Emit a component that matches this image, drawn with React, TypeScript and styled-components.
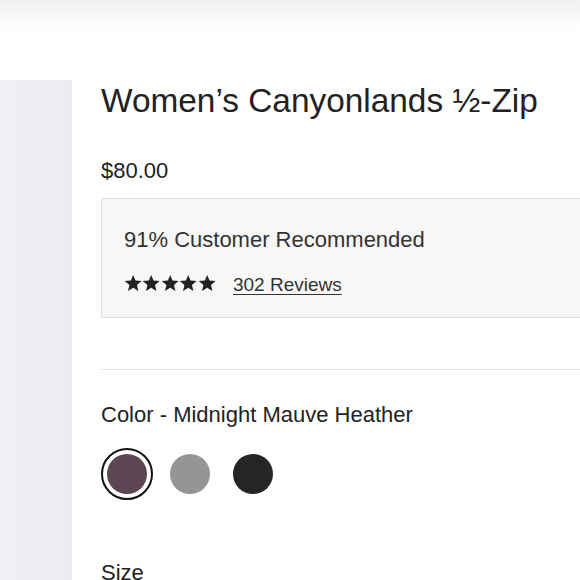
import React from "react";
import styled, { createGlobalStyle } from "styled-components";

const GlobalStyle = createGlobalStyle`
  html, body {
    margin: 0;
    padding: 0;
    background: #ffffff;
    font-family: "Liberation Sans", Arial, Helvetica, sans-serif;
    color: #222222;
  }
`;

const Page = styled.div`
  width: 580px;
  height: 580px;
  overflow: hidden;
  display: flex;
  flex-direction: column;
`;

const HeaderShade = styled.div`
  height: 30px;
  flex-shrink: 0;
  background: linear-gradient(to bottom, #f1f1f1 0%, #ffffff 100%);
`;

const Body = styled.div`
  display: flex;
  flex-direction: row;
  gap: 29px;
  flex: 1;
`;

const Gallery = styled.div`
  width: 72px;
  flex-shrink: 0;
  margin-top: 50px;
  background: linear-gradient(to right, #eef0f3 0%, #eaecef 100%);
`;

const Details = styled.div`
  flex: 1;
  min-width: 0;
  padding-top: 50px;
`;

const Title = styled.h1`
  margin: 0;
  font-size: 33.4px;
  font-weight: 400;
  line-height: 42px;
  color: #222222;
  white-space: nowrap;
`;

const Price = styled.div`
  margin-top: 36px;
  font-size: 22px;
  line-height: 26px;
`;

const ReviewBox = styled.div`
  margin-top: 14px;
  margin-right: -20px;
  height: 120px;
  box-sizing: border-box;
  background: #f7f7f7;
  border: 1px solid #dcdcdc;
  border-radius: 2px;
  padding: 28px 22px 0;
`;

const Recommended = styled.div`
  font-size: 22px;
  line-height: 26px;
  color: #333333;
`;

const RatingRow = styled.div`
  display: flex;
  align-items: flex-start;
  gap: 17px;
  margin-top: 20px;
`;

const Stars = styled.div`
  display: flex;
  margin-top: 1px;
  color: #222222;
`;

const ReviewLink = styled.a`
  font-size: 19px;
  line-height: 24px;
  color: #333333;
  text-decoration: underline;
  text-underline-offset: 3px;
  text-decoration-thickness: 1px;
`;

const Divider = styled.hr`
  margin: 51px -20px 0 0;
  border: 0;
  border-top: 1px solid #e2e2e2;
`;

const SectionLabel = styled.div`
  margin-top: 32px;
  font-size: 22px;
  line-height: 26px;
  color: #222222;
`;

const Swatches = styled.div`
  display: flex;
  align-items: center;
  gap: 11px;
  margin-top: 20px;
`;

const Swatch = styled.button<{ $color: string; $selected?: boolean }>`
  width: 52px;
  height: 52px;
  padding: 0;
  border-radius: 50%;
  border: 2px solid ${(p) => (p.$selected ? "#111111" : "transparent")};
  background: #ffffff;
  display: flex;
  align-items: center;
  justify-content: center;
  cursor: pointer;

  &::after {
    content: "";
    display: block;
    width: 40px;
    height: 40px;
    border-radius: 50%;
    background: ${(p) => p.$color};
  }
`;

const SizeLabel = styled(SectionLabel)`
  margin-top: 60px;
`;

const colors = [
  { name: "Midnight Mauve Heather", hex: "#5b4651" },
  { name: "Grey", hex: "#959595" },
  { name: "Black", hex: "#252527" },
];

const Star = () => (
  <svg width="18.4" height="18" viewBox="0 0 24 24" aria-hidden="true">
    <path
      fill="currentColor"
      d="M12 1.2l3.1 7.6 8.2.6-6.3 5.3 2 8L12 18.3l-7 4.4 2-8L.7 9.4l8.2-.6z"
    />
  </svg>
);

export default function App() {
  return (
    <>
      <GlobalStyle />
      <Page>
        <HeaderShade />
        <Body>
          <Gallery />
          <Details>
            <Title>Women’s Canyonlands ½-Zip</Title>
            <Price>$80.00</Price>
            <ReviewBox>
              <Recommended>91% Customer Recommended</Recommended>
              <RatingRow>
                <Stars aria-label="5 out of 5 stars">
                  {[0, 1, 2, 3, 4].map((i) => (
                    <Star key={i} />
                  ))}
                </Stars>
                <ReviewLink href="#">302 Reviews</ReviewLink>
              </RatingRow>
            </ReviewBox>
            <Divider />
            <SectionLabel>Color - {colors[0].name}</SectionLabel>
            <Swatches>
              {colors.map((c, i) => (
                <Swatch key={c.name} $color={c.hex} $selected={i === 0} aria-label={c.name} />
              ))}
            </Swatches>
            <SizeLabel>Size</SizeLabel>
          </Details>
        </Body>
      </Page>
    </>
  );
}
